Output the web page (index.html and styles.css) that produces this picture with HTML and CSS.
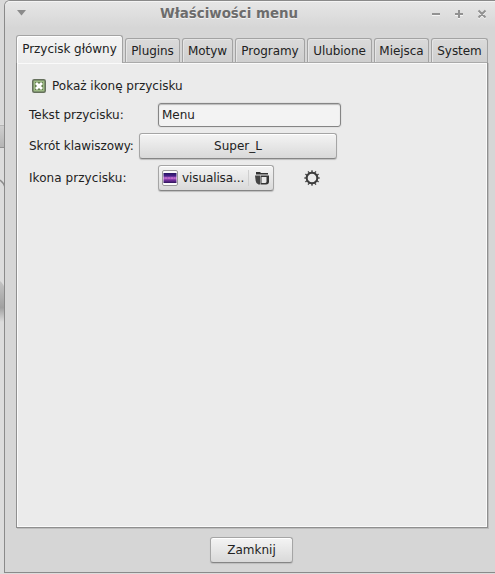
FILE: index.html
```
<!DOCTYPE html>
<html lang="pl">
<head>
<meta charset="utf-8">
<title>Właściwości menu</title>
<link rel="stylesheet" href="styles.css">
</head>
<body>
<svg class="backdrop" width="5" height="574" viewBox="0 0 5 574">
  <defs><linearGradient id="bar" x2="0" y2="1"><stop stop-color="#cfcfcf"/><stop offset="1" stop-color="#b4b4b4"/></linearGradient>
  <linearGradient id="shade" x2="0" y2="1"><stop stop-color="#c4c4c4"/><stop offset=".65" stop-color="#a0a0a0"/><stop offset="1" stop-color="#dcdcdc"/></linearGradient></defs>
  <rect width="5" height="124" fill="#d9d9d9"/>
  <rect y="125" width="5" height="22" fill="url(#bar)"/>
  <path d="M0 125.500h5" stroke="#b5b5b5"/>
  <path d="M0 147.500h5" stroke="#909090"/>
  <path d="M0 180q4 3 5 7" fill="none" stroke="#8a8a8a" stroke-width="1.500"/>
  <path d="M0 281q4 3 5 9v32H0z" fill="url(#shade)"/>
</svg>
<main class="window">
  <header class="titlebar">
    <svg class="menu-arrow" width="9" height="6" viewBox="0 0 9 6"><path d="M0 0h9L4.500 5.500z" fill="#8b8b8b"/></svg>
    <h1>Właściwości menu</h1>
    <svg class="controls" width="56" height="12" viewBox="0 0 56 12">
      <path d="M1 7h8M24 7h8M28 3v8M47.500 3.500l7 7m0-7l-7 7" stroke="#f5f5f5" stroke-width="2" fill="none"/>
      <path d="M1 6h8M24 6h8M28 2v8M47.500 2.500l7 7m0-7l-7 7" stroke="#929292" stroke-width="2" fill="none"/>
    </svg>
  </header>
  <nav class="tabs">
    <div class="tab active">Przycisk główny</div>
    <div class="tab plugins">Plugins</div>
    <div class="tab theme">Motyw</div>
    <div class="tab programs">Programy</div>
    <div class="tab favourites">Ulubione</div>
    <div class="tab places">Miejsca</div>
    <div class="tab system">System</div>
  </nav>
  <section class="panel">
    <div class="row check-row">
      <svg width="14" height="14" viewBox="0 0 14 14"><rect x=".75" y=".75" width="12.500" height="12.500" rx="1.500" fill="#9dbb84" stroke="#65705c" stroke-width="1.500"/><rect x="3" y="3" width="8" height="8" fill="#66804f"/><path d="M4 4l6 6m0-6l-6 6" stroke="#fff" stroke-width="2.800"/></svg>
      <span>Pokaż ikonę przycisku</span>
    </div>
    <div class="row text-row"><span class="label">Tekst przycisku:</span><div class="entry">Menu</div></div>
    <div class="row key-row"><span class="label short">Skrót klawiszowy:</span><div class="button shortcut">Super_L</div></div>
    <div class="row icon-row">
      <span class="label icon-label">Ikona przycisku:</span>
      <div class="button file">
        <svg width="16" height="16" viewBox="0 0 16 16"><defs><linearGradient id="violet" x2="0" y2="1"><stop stop-color="#251461"/><stop offset=".3" stop-color="#49218a"/><stop offset=".5" stop-color="#bd69ce"/><stop offset=".7" stop-color="#7932a1"/><stop offset="1" stop-color="#2d155c"/></linearGradient></defs><rect x=".5" y=".5" width="15" height="15" rx="1.500" fill="#fafafa" stroke="#999"/><rect x="1.500" y="3" width="13" height="10" fill="url(#violet)"/><path d="M3 8h10" stroke="#e690dc" stroke-dasharray="2 1" opacity=".6"/></svg>
        <span class="filename">visualisa...</span>
        <svg class="folder" width="15" height="15" viewBox="0 0 15 15"><path d="M1 3V1h4l1 1h7v1.500H1z" fill="#333"/><path d="M0 4.500h5v9H3.500Q1 13 .7 10z" fill="#444"/><path d="M5.500 4.500H14v6q0 3-3 3H5.500z" fill="#353535"/><path d="M6.500 6h5v4.500q0 1.500-1.500 1.500H6.500z" fill="#e8e8e8"/></svg>
      </div>
      <svg class="gear" width="18" height="18" viewBox="0 0 18 18"><circle cx="9" cy="9" r="5.300" fill="none" stroke="#3d3d3d" stroke-width="1.900"/><path d="M8 4l1-3L10 4zM8 14l1 3 1-3zM4 8L1 9l3 1zM14 8l3 1-3 1zM5.600 5.100L5 2l2.300 2.100zM12.400 5.100L13 2l-2.300 2.100zM5.600 12.900L5 16l2.300-2.100zM12.400 12.900L13 16l-2.300-2.100zM5.100 5.600L2 5l2.100 2.300zM12.900 5.600L16 5l-2.100 2.300zM5.100 12.400L2 13l2.100-2.300zM12.900 12.400L16 13l-2.100-2.300z" fill="#3d3d3d" stroke="#3d3d3d" stroke-width=".4"/></svg>
    </div>
  </section>
  <footer><div class="button close">Zamknij</div></footer>
</main>
</body>
</html>
```
FILE: styles.css
```
* { box-sizing: border-box; }
body {
  margin: 0;
  width: 495px;
  height: 574px;
  overflow: hidden;
  display: flex;
  background: #dcdcdc;
  color: #222;
  font: 12px/16px "DejaVu Sans", sans-serif;
  white-space: nowrap;
}
.backdrop { flex: none; margin-right: -1px; }
.window {
  width: 491px;
  height: 573px;
  border: 1px solid #8a8a8a;
  border-right: 0;
  border-radius: 6px 0 0 0;
  background: #d6d6d6;
}
.titlebar {
  height: 34px;
  display: flex;
  padding-left: 12px;
  border-top: 1px solid #f4f4f4;
  border-radius: 5px 0 0 0;
  background: linear-gradient(#e6e6e6, #d6d6d6 26px);
}
.menu-arrow { margin-top: 8px; }
h1 {
  margin: 4px 0 0 134px;
  width: 140px;
  font: bold 13.4px/16px "DejaVu Sans", sans-serif;
  color: #6c6c6c;
  text-shadow: 0 1px #f2f2f2;
}
.controls { margin: 6px 0 0 131px; }
.tabs {
  height: 27px;
  display: flex;
  align-items: flex-end;
  margin-left: 11px;
  gap: 2px;
}
.tab {
  height: 24px;
  flex: none;
  padding-top: 4px;
  text-align: center;
  letter-spacing: -.05px;
  border: 1px solid #a3a3a3;
  border-bottom: 0;
  border-radius: 3px 3px 0 0;
  box-shadow: inset 1px 1px #e5e5e5;
  background: linear-gradient(#dadada, #cfcfcf);
}
.active {
  width: 107px;
  height: 28px;
  margin-bottom: -1px;
  padding-top: 5px;
  position: relative;
  box-shadow: inset 1px 1px #fff;
  background: linear-gradient(#f4f4f4, #ececec);
}
.plugins { width: 55px; }
.theme { width: 51px; }
.programs { width: 70px; }
.favourites { width: 65px; }
.places { width: 55px; }
.system { width: 57px; }
.panel {
  width: 472px;
  height: 466px;
  margin-left: 11px;
  padding: 14px 0 0 12px;
  border: 1px solid #8f8f8f;
  border-top-color: #aaa;
  box-shadow: inset 0 0 0 1px #fafafa, 1px 1px #bcbcbc;
  background: #ebebeb;
}
.row { display: flex; align-items: center; }
.check-row { height: 18px; padding-left: 3px; gap: 6px; }
.text-row { height: 26px; margin-top: 7px; }
.key-row { height: 28px; margin-top: 4px; }
.icon-row { height: 28px; margin-top: 4px; }
.label { width: 129px; }
.short { width: 110px; letter-spacing: -.06px; }
.icon-label { letter-spacing: .06px; }
.entry {
  width: 183px;
  height: 24px;
  padding: 3px;
  border: 1px solid #858585;
  border-radius: 3px;
  background: #f3f3f3;
  box-shadow: inset 0 1px 1px #bbb, 0 0 0 1px #e2e2e2;
}
.button {
  height: 26px;
  border: 1px solid #a5a5a5;
  border-bottom-color: #858585;
  border-radius: 3px;
  background: linear-gradient(#f4f4f4, #d9d9d9);
  box-shadow: inset 0 1px #fff, 0 1px 1px #bdbdbd;
  text-align: center;
  line-height: 24px;
}
.shortcut { width: 198px; }
.file { width: 116px; display: flex; align-items: center; padding-left: 3px; }
.filename { width: 67px; height: 16px; margin-left: 4px; line-height: 16px; text-align: left; letter-spacing: -.1px; border-right: 1px solid #cfcfcf; }
.folder { margin-left: 6px; }
.gear { margin-left: 29px; }
footer { padding: 9px 0 0 205px; }
.close { width: 83px; }
```
